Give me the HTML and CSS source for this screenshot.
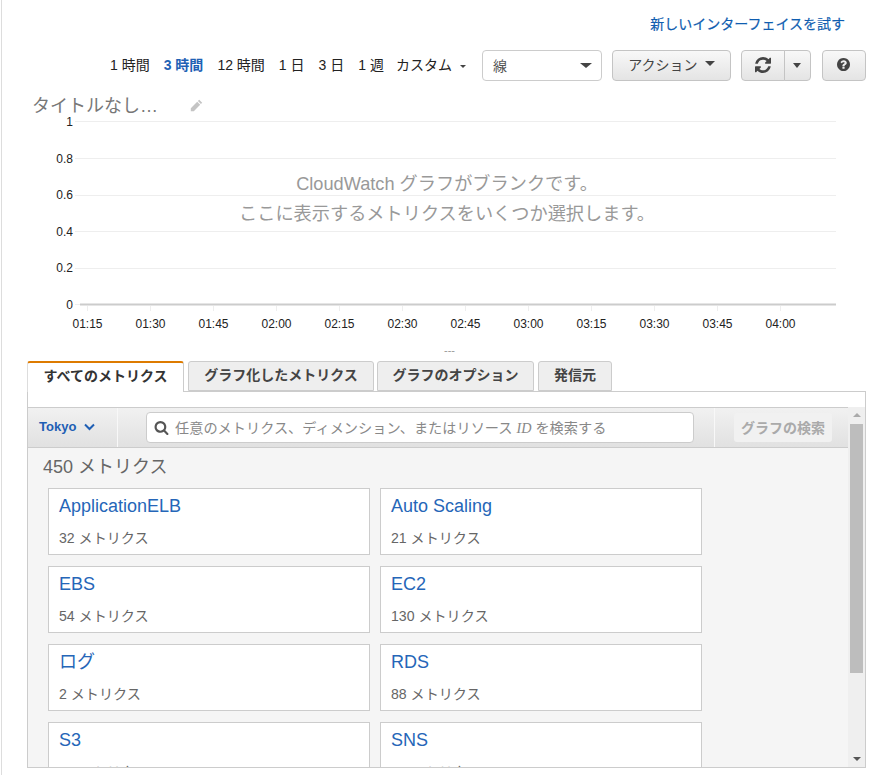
FILE: index.html
```html
<!DOCTYPE html>
<html lang="ja">

<head>
    <meta charset="UTF-8">
    <meta name="viewport" content="width=device-width, initial-scale=1.0">
    <title>CloudWatch メトリクス</title>
    <link rel="stylesheet" href="styles.css">
</head>

<body>
    <div class="page">
        <div class="try-row">
            <a href="#" class="try-link">新しいインターフェイスを試す</a>
        </div>

        <div class="toolbar">
            <div class="ranges">
                <a href="#">1 時間</a>
                <a href="#" class="active">3 時間</a>
                <a href="#">12 時間</a>
                <a href="#">1 日</a>
                <a href="#">3 日</a>
                <a href="#">1 週</a>
                <a href="#" class="custom">カスタム<span class="caret small"></span></a>
            </div>
            <div class="select-box">線<span class="caret"></span></div>
            <button class="btn btn-action"><span>アクション</span><span class="caret"></span></button>
            <div class="btn-group">
                <button class="btn btn-refresh">
                    <svg width="16" height="16" viewBox="0 0 1536 1536">
                        <path fill="#444" d="M1511 928q0 5-1 7-64 268-268 434.5t-478 166.5q-146 0-282.5-55t-243.5-157l-129 129q-19 19-45 19t-45-19-19-45v-448q0-26 19-45t45-19h448q26 0 45 19t19 45-19 45l-137 137q71 66 161 102t187 36q134 0 250-65t186-179q11-17 53-117 8-23 30-23h192q13 0 22.5 9.5t9.5 22.5zm25-800v448q0 26-19 45t-45 19h-448q-26 0-45-19t-19-45 19-45l138-138q-148-137-349-137-134 0-250 65t-186 179q-11 17-53 117-8 23-30 23h-199q-13 0-22.5-9.5t-9.5-22.5v-7q65-268 270-434.5t480-166.5q146 0 284 55.5t245 156.5l130-129q19-19 45-19t45 19 19 45z" />
                    </svg>
                </button>
                <button class="btn btn-split"><span class="caret"></span></button>
            </div>
            <button class="btn btn-help">
                <svg width="13" height="13" viewBox="0 128 1536 1536">
                    <path fill="#444" d="M896 1376v-192q0-14-9-23t-23-9h-192q-14 0-23 9t-9 23v192q0 14 9 23t23 9h192q14 0 23-9t9-23zm256-672q0-88-55.5-163t-138.5-116-170-41q-243 0-371 213-15 24 8 42l132 100q7 6 19 6 16 0 25-12 53-68 86-92 34-24 86-24 48 0 85.5 26t37.5 59q0 38-20 61t-68 45q-63 28-115.5 86.5t-52.5 125.5v36q0 14 9 23t23 9h192q14 0 23-9t9-23q0-19 21.5-49.5t54.5-49.5q32-18 49-28.5t46-35 44.5-48 28-60.5 12.5-81zm384 192q0 209-103 385.5t-279.5 279.5-385.5 103-385.5-103-279.5-279.5-103-385.5 103-385.5 279.5-279.5 385.5-103 385.5 103 279.5 279.5 103 385.5z" />
                </svg>
            </button>
        </div>

        <div class="title-row">
            <span class="graph-title">タイトルなし…</span>
            <svg class="pencil" width="13" height="13" viewBox="0 0 13 13">
                <path fill="#c4c4c4" d="M9.2.8l3 3-1.3 1.3-3-3zM7.2 2.8l3 3-6.4 6.4H.8v-3z" />
            </svg>
        </div>

        <div class="chart">
            <svg class="chart-svg" width="840" height="220" viewBox="2 0 840 220">
                <g class="grid">
                    <line x1="75" x2="836" y1="6.5" y2="6.5" />
                    <line x1="75" x2="836" y1="43.5" y2="43.5" />
                    <line x1="75" x2="836" y1="80.5" y2="80.5" />
                    <line x1="75" x2="836" y1="116.5" y2="116.5" />
                    <line x1="75" x2="836" y1="153.5" y2="153.5" />
                    <line x1="75" x2="80" y1="189.5" y2="189.5" />
                </g>
                <line class="axis" x1="80" x2="836" y1="189.5" y2="189.5" />
                <g class="grid">
                    <line x1="87.5" x2="87.5" y1="191" y2="196" />
                    <line x1="150.5" x2="150.5" y1="191" y2="196" />
                    <line x1="213.5" x2="213.5" y1="191" y2="196" />
                    <line x1="276.5" x2="276.5" y1="191" y2="196" />
                    <line x1="339.5" x2="339.5" y1="191" y2="196" />
                    <line x1="402.5" x2="402.5" y1="191" y2="196" />
                    <line x1="465.5" x2="465.5" y1="191" y2="196" />
                    <line x1="528.5" x2="528.5" y1="191" y2="196" />
                    <line x1="591.5" x2="591.5" y1="191" y2="196" />
                    <line x1="654.5" x2="654.5" y1="191" y2="196" />
                    <line x1="717.5" x2="717.5" y1="191" y2="196" />
                    <line x1="780.5" x2="780.5" y1="191" y2="196" />
                </g>
                <g class="y-labels">
                    <text x="73" y="11">1</text>
                    <text x="73" y="48">0.8</text>
                    <text x="73" y="84">0.6</text>
                    <text x="73" y="121">0.4</text>
                    <text x="73" y="157">0.2</text>
                    <text x="73" y="194">0</text>
                </g>
                <g class="x-labels">
                    <text x="87.5" y="213">01:15</text>
                    <text x="150.5" y="213">01:30</text>
                    <text x="213.5" y="213">01:45</text>
                    <text x="276.5" y="213">02:00</text>
                    <text x="339.5" y="213">02:15</text>
                    <text x="402.5" y="213">02:30</text>
                    <text x="465.5" y="213">02:45</text>
                    <text x="528.5" y="213">03:00</text>
                    <text x="591.5" y="213">03:15</text>
                    <text x="654.5" y="213">03:30</text>
                    <text x="717.5" y="213">03:45</text>
                    <text x="780.5" y="213">04:00</text>
                </g>
            </svg>
            <div class="blank-msg">
                <p>CloudWatch グラフがブランクです。</p>
                <p>ここに表示するメトリクスをいくつか選択します。</p>
            </div>
        </div>

        <div class="grip">---</div>

        <ul class="tabs">
            <li class="tab tab-active">すべてのメトリクス</li>
            <li class="tab tab-graphed">グラフ化したメトリクス</li>
            <li class="tab tab-options">グラフのオプション</li>
            <li class="tab tab-source">発信元</li>
        </ul>

        <div class="panel">
            <div class="panel-gap"></div>
            <div class="panel-main">
                <div class="panel-content">
                    <div class="search-bar">
                        <div class="region">Tokyo
                            <svg width="11" height="8" viewBox="0 0 11 8">
                                <path fill="none" stroke="#1f5fb4" stroke-width="2" d="M1 1.5l4.5 4.5 4.5-4.5" />
                            </svg>
                        </div>
                        <div class="search-cell">
                            <div class="search-input">
                                <svg width="15" height="15" viewBox="0 0 1792 1792">
                                    <path fill="#555" d="M1216 832q0-185-131.5-316.5t-316.5-131.5-316.5 131.5-131.5 316.5 131.5 316.5 316.5 131.5 316.5-131.5 131.5-316.5zm512 832q0 52-38 90t-90 38q-54 0-90-38l-343-342q-179 124-399 124-143 0-273.5-55.5t-225-150-150-225-55.5-273.5 55.5-273.5 150-225 225-150 273.5-55.5 273.5 55.5 225 150 150 225 55.5 273.5q0 220-124 399l343 343q37 37 37 90z" />
                                </svg>
                                <span class="search-text">任意のメトリクス、ディメンション、またはリソース <em>ID</em> を検索する</span>
                            </div>
                        </div>
                        <div class="search-btn-cell">
                            <button class="btn-search" disabled>グラフの検索</button>
                        </div>
                    </div>

                    <div class="metrics">
                        <h3 class="metrics-count">450 メトリクス</h3>
                        <div class="card-grid">
                            <div class="card"><a href="#">ApplicationELB</a><span>32 メトリクス</span></div>
                            <div class="card"><a href="#">Auto Scaling</a><span>21 メトリクス</span></div>
                            <div class="card"><a href="#">EBS</a><span>54 メトリクス</span></div>
                            <div class="card"><a href="#">EC2</a><span>130 メトリクス</span></div>
                            <div class="card"><a href="#">ログ</a><span>2 メトリクス</span></div>
                            <div class="card"><a href="#">RDS</a><span>88 メトリクス</span></div>
                            <div class="card"><a href="#">S3</a><span>12 メトリクス</span></div>
                            <div class="card"><a href="#">SNS</a><span>12 メトリクス</span></div>
                        </div>
                    </div>
                </div>

                <div class="scrollbar">
                    <span class="arrow-up"></span>
                    <div class="thumb-track">
                        <div class="thumb"></div>
                    </div>
                    <span class="arrow-down"></span>
                </div>
            </div>
        </div>
    </div>
</body>

</html>
```

FILE: styles.css
```css
* {
    box-sizing: border-box;
}

html,
body {
    margin: 0;
    padding: 0;
    background-color: white;
    overflow: hidden;
}

body {
    font-family: "Liberation Sans", "Noto Sans CJK JP", sans-serif;
    color: #333;
    height: 775px;
}

a {
    text-decoration: none;
}

.page {
    height: 775px;
    margin-left: 1px;
    border-left: 1px solid #ddd;
    overflow: hidden;
}

.try-row {
    height: 50px;
    padding: 14px 31px 0 0;
    text-align: right;
}

.try-link {
    font-size: 14px;
    line-height: 20px;
    color: #0f5db0;
    -webkit-text-stroke: 0.2px #0f5db0;
}

/* toolbar */
.toolbar {
    display: flex;
    align-items: center;
    height: 31px;
}

.ranges {
    display: flex;
    align-items: center;
    margin-left: 108px;
    padding-bottom: 3px;
    gap: 14px;
    font-size: 14px;
    white-space: nowrap;
}

.ranges a {
    color: #222;
}

.ranges a.active {
    color: #1f62b5;
    font-weight: bold;
}

.ranges a.custom {
    margin-left: -2px;
}

.caret {
    display: inline-block;
    width: 0;
    height: 0;
    border-left: 6px solid transparent;
    border-right: 6px solid transparent;
    border-top: 5px solid #444;
}

.caret.small {
    margin-left: 8px;
    border-left-width: 3px;
    border-right-width: 3px;
    border-top-width: 3px;
    vertical-align: 2px;
}

.select-box {
    display: flex;
    align-items: center;
    justify-content: space-between;
    flex-shrink: 0;
    width: 120px;
    height: 31px;
    margin-left: 16px;
    padding: 0 9px 1px 10px;
    border: 1px solid #ccc;
    border-radius: 4px;
    font-size: 14px;
    color: #555;
}

.btn {
    display: flex;
    align-items: center;
    justify-content: center;
    flex-shrink: 0;
    height: 31px;
    padding: 0 0 2px;
    border: 1px solid #c4c4c4;
    border-radius: 4px;
    background: linear-gradient(#f8f8f8, #e4e4e4);
    font-family: inherit;
    color: #444;
}

.btn-action {
    width: 119px;
    margin-left: 10px;
    padding: 0 0 4px;
    gap: 7px;
    font-size: 14px;
}

.btn-action .caret {
    border-left-width: 5px;
    border-right-width: 5px;
}

.btn-group {
    display: flex;
    margin-left: 10px;
}

.btn-refresh {
    width: 44px;
    border-radius: 4px 0 0 4px;
}

.btn-split {
    width: 27px;
    margin-left: -1px;
    padding: 0;
    border-radius: 0 4px 4px 0;
}

.btn-split .caret {
    border-left-width: 4px;
    border-right-width: 4px;
}

.btn-help {
    width: 44px;
    margin-left: 11px;
}

/* chart */
.title-row {
    display: flex;
    align-items: center;
    height: 34px;
    padding: 12px 0 0 30px;
}

.graph-title {
    font-size: 18px;
    color: #777;
}

.pencil {
    margin: 2px 0 0 32px;
}

.chart {
    position: relative;
    height: 220px;
}

.chart-svg {
    display: block;
}

.grid line {
    stroke: #eee;
}

.axis {
    stroke: #ccc;
    stroke-width: 2;
}

.y-labels text {
    font-size: 12px;
    fill: #222;
    text-anchor: end;
}

.x-labels text {
    font-size: 12px;
    fill: #222;
    text-anchor: middle;
}

.blank-msg {
    position: absolute;
    top: 54px;
    left: 0;
    width: 890px;
    text-align: center;
    font-size: 18.2px;
    line-height: 30px;
    color: #999;
}

.blank-msg p {
    margin: 0;
}

.grip {
    height: 26px;
    padding-left: 442px;
    font-size: 11px;
    line-height: 31px;
    color: #999;
}

/* tabs */
.tabs {
    display: flex;
    height: 30px;
    margin: 0;
    padding: 0 0 0 25px;
    list-style: none;
    position: relative;
    z-index: 1;
}

.tab {
    height: 30px;
    margin-right: 4px;
    border: 1px solid #ccc;
    border-radius: 3px 3px 0 0;
    background-color: #eee;
    font-size: 14px;
    font-weight: bold;
    line-height: 26px;
    text-align: center;
    color: #444;
}

.tab-active {
    width: 157px;
    height: 31px;
    border: none;
    border-top: 2px solid #dd7b00;
    border-left: 1px solid #ddd;
    border-right: 1px solid #ccc;
    background-color: white;
    color: #333;
}

.tab-graphed {
    width: 186px;
    margin-right: 3px;
}

.tab-options {
    width: 157px;
}

.tab-source {
    width: 74px;
}

/* panel */
.panel {
    display: flex;
    flex-direction: column;
    width: 839px;
    height: 377px;
    margin-left: 25px;
    border: 1px solid #ccc;
    background-color: white;
}

.panel-gap {
    height: 15px;
    flex-shrink: 0;
}

.panel-main {
    display: flex;
    flex: 1;
    min-height: 0;
}

.panel-content {
    flex: 1;
    min-width: 0;
    overflow: hidden;
    background-color: #f5f5f5;
}

.search-bar {
    display: flex;
    height: 41px;
    border-top: 1px solid #ccc;
    border-bottom: 1px solid #ccc;
    background: linear-gradient(#f1f1f1, #e1e1e1);
}

.region {
    display: flex;
    align-items: center;
    gap: 8px;
    width: 90px;
    padding: 0 0 2px 11px;
    border-right: 1px solid #f8f8f8;
    font-size: 13px;
    font-weight: bold;
    color: #1f5fb4;
}

.search-cell {
    width: 597px;
    padding: 4px 0 0 28px;
    border-right: 1px solid #f8f8f8;
}

.search-input {
    display: flex;
    align-items: center;
    gap: 6px;
    width: 548px;
    height: 31px;
    padding-left: 7px;
    border: 1px solid #ccc;
    border-radius: 4px;
    background-color: white;
    font-size: 14.2px;
    color: #888;
}

.search-text {
    padding-bottom: 2px;
}

.search-text em {
    font-family: "Liberation Serif", serif;
}

.search-btn-cell {
    padding: 5px 0 0 19px;
}

.btn-search {
    width: 98px;
    height: 29px;
    padding: 0 0 2px;
    border: none;
    border-radius: 3px;
    background-color: #f1f1f1;
    font-family: inherit;
    font-size: 14px;
    font-weight: bold;
    color: #aaa;
}

.metrics {
    padding: 7px 0 0 20px;
}

.metrics-count {
    margin: 0 0 9px -5px;
    font-size: 18px;
    font-weight: normal;
    line-height: 24px;
    color: #666;
}

.card-grid {
    display: grid;
    grid-template-columns: 322px 322px;
    grid-auto-rows: 67px;
    gap: 11px 10px;
}

.card {
    display: flex;
    flex-direction: column;
    padding: 4px 10px 0;
    border: 1px solid #ccc;
    background-color: white;
}

.card a {
    font-size: 18px;
    line-height: 26px;
    color: #2566b8;
}

.card span {
    margin-top: 9px;
    font-size: 14.1px;
    line-height: 20px;
    color: #666;
}

/* scrollbar */
.scrollbar {
    display: flex;
    flex-direction: column;
    align-items: center;
    width: 17px;
    flex-shrink: 0;
    background-color: #efefef;
}

.arrow-up,
.arrow-down {
    width: 0;
    height: 0;
    flex-shrink: 0;
    border-left: 4px solid transparent;
    border-right: 4px solid transparent;
}

.arrow-up {
    margin-top: 6px;
    border-bottom: 4px solid #aaa;
}

.arrow-down {
    margin-bottom: 6px;
    border-top: 4px solid #555;
}

.thumb-track {
    flex: 1;
    width: 13px;
    padding-top: 7px;
}

.thumb {
    height: 249px;
    background-color: #bdbdbd;
}
```
